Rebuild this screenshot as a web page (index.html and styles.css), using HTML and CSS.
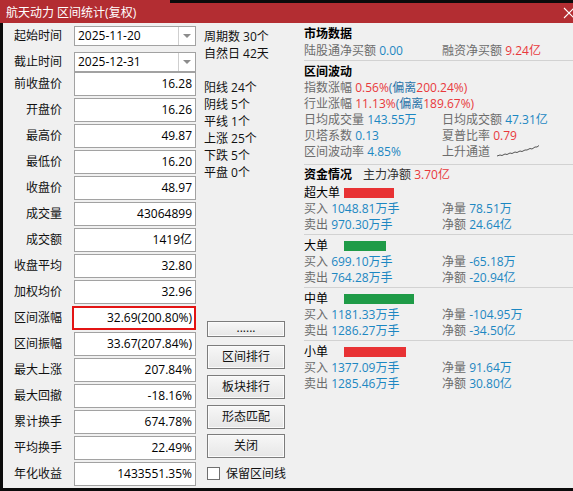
FILE: index.html
```html
<!DOCTYPE html>
<html lang="zh-CN">
<head>
<meta charset="utf-8">
<title>区间统计</title>
<link rel="stylesheet" href="styles.css">
</head>
<body>
<div class="dialog">
  <div class="titlebar">
    <span class="title">航天动力 区间统计(复权)</span>
    <svg class="close" width="12" height="12" viewBox="0 0 12 12"><path d="M1 1 L11 11 M11 1 L1 11" stroke="#fff" stroke-width="1.1" fill="none"/></svg>
  </div>
  <div class="content">
    <div class="col-left">
      <div class="row combo-row first">
        <span class="label">起始时间</span>
        <div class="combo"><span class="combo-text">2025-11-20</span><span class="combo-btn"><i class="tri"></i></span></div>
      </div>
      <div class="row combo-row">
        <span class="label">截止时间</span>
        <div class="combo"><span class="combo-text">2025-12-31</span><span class="combo-btn"><i class="tri"></i></span></div>
      </div>
      <div class="row"><span class="label">前收盘价</span><div class="field">16.28</div></div>
      <div class="row"><span class="label">开盘价</span><div class="field">16.26</div></div>
      <div class="row"><span class="label">最高价</span><div class="field">49.87</div></div>
      <div class="row"><span class="label">最低价</span><div class="field">16.20</div></div>
      <div class="row"><span class="label">收盘价</span><div class="field">48.97</div></div>
      <div class="row"><span class="label">成交量</span><div class="field">43064899</div></div>
      <div class="row"><span class="label">成交额</span><div class="field">1419亿</div></div>
      <div class="row"><span class="label">收盘平均</span><div class="field">32.80</div></div>
      <div class="row"><span class="label">加权均价</span><div class="field">32.96</div></div>
      <div class="row"><span class="label">区间涨幅</span><div class="field field-hl">32.69(200.80%)</div></div>
      <div class="row"><span class="label">区间振幅</span><div class="field">33.67(207.84%)</div></div>
      <div class="row"><span class="label">最大上涨</span><div class="field">207.84%</div></div>
      <div class="row"><span class="label">最大回撤</span><div class="field">-18.16%</div></div>
      <div class="row"><span class="label">累计换手</span><div class="field">674.78%</div></div>
      <div class="row"><span class="label">平均换手</span><div class="field">22.49%</div></div>
      <div class="row"><span class="label">年化收益</span><div class="field">1433551.35%</div></div>
    </div>

    <div class="col-mid">
      <div class="stats">
        <div class="stat">周期数 30个</div>
        <div class="stat">自然日 42天</div>
      </div>
      <div class="stats stats-gap">
        <div class="stat">阳线 24个</div>
        <div class="stat">阴线 5个</div>
        <div class="stat">平线 1个</div>
        <div class="stat">上涨 25个</div>
        <div class="stat">下跌 5个</div>
        <div class="stat">平盘 0个</div>
      </div>
      <div class="actions">
        <div class="btn btn-small">......</div>
        <div class="btn btn-a">区间排行</div>
        <div class="btn btn-b">板块排行</div>
        <div class="btn btn-b">形态匹配</div>
        <div class="btn btn-c">关闭</div>
        <label class="check"><span class="box"></span><span>保留区间线</span></label>
      </div>
    </div>

    <div class="col-right">
      <div class="heading">市场数据</div>
      <div class="grid first-grid">
        <div><span class="k">陆股通净买额</span> <span class="v">0.00</span></div>
        <div><span class="k">融资净买额</span> <span class="r">9.24亿</span></div>
      </div>
      <div class="sep sep-a"></div>
      <div class="heading">区间波动</div>
      <div class="line"><span class="k">指数涨幅</span> <span class="r">0.56%</span><span class="v2">(偏离</span><span class="r">200.24%)</span></div>
      <div class="line"><span class="k">行业涨幅</span> <span class="r">11.13%</span><span class="v2">(偏离</span><span class="r">189.67%)</span></div>
      <div class="grid">
        <div><span class="k">日均成交量</span> <span class="v">143.55万</span></div>
        <div><span class="k">日均成交额</span> <span class="v">47.31亿</span></div>
        <div><span class="k">贝塔系数</span> <span class="v">0.13</span></div>
        <div><span class="k">夏普比率</span> <span class="r">0.79</span></div>
        <div><span class="k">区间波动率</span> <span class="v">4.85%</span></div>
        <div class="trend"><span class="k">上升通道</span>
          <svg class="spark" width="42" height="12" viewBox="0 0 42 12"><polyline points="0,11 3,10 5,10.5 8,9 10,9.5 13,8 15,8.5 18,7 20,7.5 23,6 25,6.5 28,5 30,5 33,3.5 35,4 38,2 40,2 42,0.5" fill="none" stroke="#555" stroke-width="1"/></svg>
        </div>
      </div>
      <div class="sep sep-b"></div>
      <div class="heading fund"><span>资金情况</span><span class="main-net"><span class="dk">主力净额</span> <span class="r">3.70亿</span></span></div>

      <div class="group">
        <div class="gname"><span class="gtitle">超大单</span><span class="bar red" style="width:50px"></span></div>
        <div class="grid">
          <div><span class="k">买入</span> <span class="v">1048.81万手</span></div>
          <div><span class="k">净量</span> <span class="v">78.51万</span></div>
          <div><span class="k">卖出</span> <span class="v">970.30万手</span></div>
          <div><span class="k">净额</span> <span class="v">24.64亿</span></div>
        </div>
      </div>
      <div class="sep sep-g"></div>
      <div class="group">
        <div class="gname"><span class="gtitle">大单</span><span class="bar green" style="width:42px"></span></div>
        <div class="grid">
          <div><span class="k">买入</span> <span class="v">699.10万手</span></div>
          <div><span class="k">净量</span> <span class="v">-65.18万</span></div>
          <div><span class="k">卖出</span> <span class="v">764.28万手</span></div>
          <div><span class="k">净额</span> <span class="v">-20.94亿</span></div>
        </div>
      </div>
      <div class="sep sep-g"></div>
      <div class="group">
        <div class="gname"><span class="gtitle">中单</span><span class="bar green" style="width:70px"></span></div>
        <div class="grid">
          <div><span class="k">买入</span> <span class="v">1181.33万手</span></div>
          <div><span class="k">净量</span> <span class="v">-104.95万</span></div>
          <div><span class="k">卖出</span> <span class="v">1286.27万手</span></div>
          <div><span class="k">净额</span> <span class="v">-34.50亿</span></div>
        </div>
      </div>
      <div class="sep sep-g"></div>
      <div class="group">
        <div class="gname"><span class="gtitle">小单</span><span class="bar red" style="width:62px"></span></div>
        <div class="grid">
          <div><span class="k">买入</span> <span class="v">1377.09万手</span></div>
          <div><span class="k">净量</span> <span class="v">91.64万</span></div>
          <div><span class="k">卖出</span> <span class="v">1285.46万手</span></div>
          <div><span class="k">净额</span> <span class="v">30.80亿</span></div>
        </div>
      </div>
    </div>
  </div>
</div>
</body>
</html>
```

FILE: styles.css
```css
* { box-sizing: border-box; }

body {
  margin: 0;
  width: 573px;
  height: 491px;
  overflow: hidden;
  background: #0b0b0b;
  font-family: "Open Sans", "Noto Sans CJK SC", sans-serif;
  font-size: 12px;
  color: #000;
}

.dialog {
  display: flex;
  flex-direction: column;
  height: 491px;
}

.titlebar {
  flex: none;
  height: 23px;
  display: flex;
  align-items: center;
  justify-content: space-between;
  padding: 2px 0 0 6px;
  background: linear-gradient(#0b0b0b, #0b0b0b) no-repeat 170px 0 / 100% 3px, #b32d32;
  color: #fff;
}

.title { line-height: 16px; }

.close { margin-right: -2px; }

.content {
  flex: 1;
  display: flex;
  background: #f0f0f0;
  border-left: 3px solid #0b0b0b;
  border-bottom: 3px solid #0b0b0b;
}

/* left column */
.col-left {
  width: 197px;
  flex: none;
  padding-top: 3px;
  display: flex;
  flex-direction: column;
}

.row {
  display: flex;
  align-items: center;
  height: 24px;
  margin-bottom: 2px;
}

.combo-row { height: 20px; margin-bottom: 0; }
.combo-row.first { margin-bottom: 6px; }

.label {
  width: 59px;
  margin-right: 12px;
  text-align: right;
  line-height: 16px;
  color: #111;
}

.combo {
  width: 122px;
  height: 20px;
  display: flex;
  border: 1px solid #a2a2a2;
  background: #fff;
}

.combo-text {
  flex: 1;
  padding-left: 3px;
  line-height: 18px;
}

.combo-btn {
  width: 17px;
  border-left: 1px solid #cfcfcf;
  display: flex;
  align-items: center;
  justify-content: center;
}

.tri {
  width: 0;
  height: 0;
  border-left: 4px solid transparent;
  border-right: 4px solid transparent;
  border-top: 4px solid #8c8c8c;
}

.field {
  width: 122px;
  height: 24px;
  border: 1px solid #a2a2a2;
  background: #fff;
  text-align: right;
  padding-right: 3px;
  line-height: 22px;
}

.field-hl {
  border: 2px solid #e31414;
  width: 124px;
  margin-left: -2px;
  padding-right: 2px;
  line-height: 20px;
}

/* middle column */
.col-mid {
  width: 100px;
  flex: none;
  padding: 5px 0 7px 4px;
  display: flex;
  flex-direction: column;
}

.stat {
  line-height: 17px;
  color: #111;
}

.stats-gap { margin-top: 17px; }

.actions {
  margin-top: auto;
  padding-left: 3px;
  display: flex;
  flex-direction: column;
}

.btn {
  width: 78px;
  height: 24px;
  border: 1px solid #7c7c7c;
  background: linear-gradient(#f7f7f7, #e6e6e6);
  box-shadow: inset 0 0 0 1px #fbfbfb;
  text-align: center;
  line-height: 22px;
  color: #111;
}

.btn-small { height: 16px; line-height: 11px; }
.btn-a { margin-top: 8px; }
.btn-b { margin-top: 6px; }
.btn-c { margin-top: 5px; }

.check {
  margin-top: 7px;
  height: 16px;
  display: flex;
  align-items: center;
  gap: 6px;
  color: #111;
}

.box {
  width: 13px;
  height: 13px;
  border: 1px solid #6f6f6f;
  background: #fff;
}

/* right column */
.col-right {
  flex: 1;
  padding: 3px 0 0 4px;
  display: flex;
  flex-direction: column;
}

.heading {
  font-weight: bold;
  line-height: 16px;
}

.fund {
  display: flex;
  gap: 11px;
}

.main-net { font-weight: normal; }

.grid {
  display: grid;
  grid-template-columns: 138px 1fr;
  line-height: 16px;
}

.first-grid { margin-top: 1px; }

.line { line-height: 16px; }

.k { color: #6c6c6c; }
.dk { color: #333; }
.v { color: #1c87c2; }
.v2 { color: #2a73a8; }
.r { color: #e8393c; }

.trend {
  display: flex;
  align-items: center;
  gap: 7px;
}

.spark { margin-top: -2px; }

.sep {
  height: 1px;
  background: #d2d2d2;
}

.sep-a { margin: 1px 0 3px; }
.sep-b { margin: 4px 0 2px; }
.sep-g { margin: 1px 0 2px; }

.group .grid { line-height: 16px; }

.gname {
  height: 17px;
  margin-top: 1px;
  display: flex;
  align-items: center;
  line-height: 17px;
}

.sep-g + .group .gname { margin-top: 0; }

.gtitle { width: 40px; }

.bar { height: 10px; }
.red { background: #e83234; }
.green { background: #1f9b47; }
```
